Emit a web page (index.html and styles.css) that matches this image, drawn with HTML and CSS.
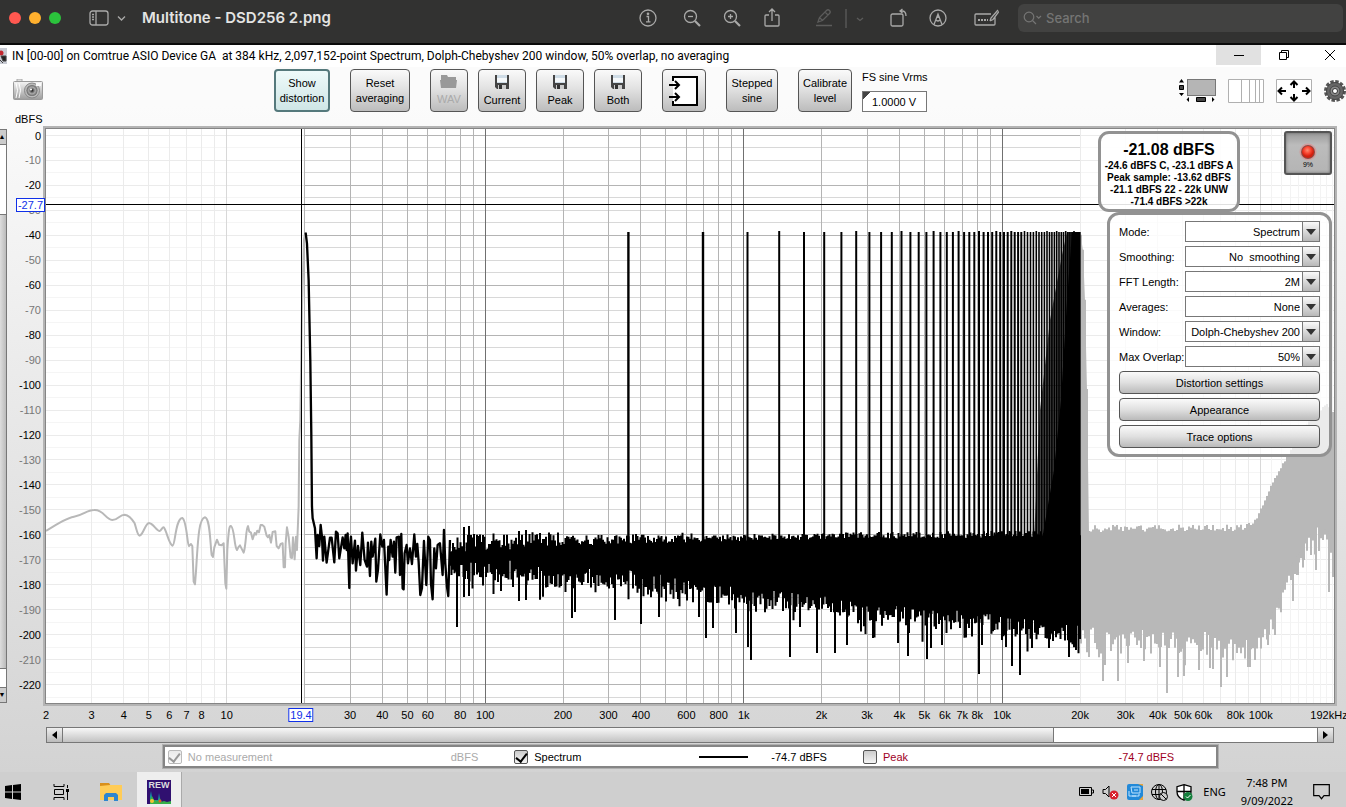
FILE: index.html
```html
<!DOCTYPE html>
<html lang="en">
<head>
<meta charset="utf-8">
<title>Multitone - DSD256 2.png</title>
<link rel="stylesheet" href="styles.css">
</head>
<body>
<svg class="defs" width="0" height="0" aria-hidden="true">
  <defs>
    <linearGradient id="metal" x1="0" y1="0" x2="0" y2="1"><stop offset="0" stop-color="#f4f4f4"/><stop offset="1" stop-color="#9c9c9c"/></linearGradient>
    <radialGradient id="lens"><stop offset="0" stop-color="#111"/><stop offset=".3" stop-color="#666"/><stop offset=".6" stop-color="#aaa"/><stop offset="1" stop-color="#666"/></radialGradient>
    <radialGradient id="lamp" cx=".45" cy=".35"><stop offset="0" stop-color="#ff8a70"/><stop offset=".6" stop-color="#f8402c"/><stop offset="1" stop-color="#d02010"/></radialGradient>
    <symbol id="floppy" viewBox="0 0 16 16"><path d="M1 1h14v14H3l-2-2z" fill="#444"/><path d="M3 1h10v8H3z" fill="#cfdce6"/><path d="M3 4h10v4H3z" fill="#f5f8fa"/><path d="M4 11h8v4H4z" fill="#ccc"/><path d="M5 11h3v4H5z" fill="#333"/></symbol>
  </defs>
</svg>

<header class="preview-bar">
  <div class="lights"><button class="light red" aria-label="Close"></button><button class="light amber" aria-label="Minimise"></button><button class="light green" aria-label="Zoom"></button></div>
  <button class="tool sidebar-toggle" aria-label="Sidebar"><svg width="38" height="18" viewBox="0 0 38 18"><rect x="1" y="2" width="18" height="14" rx="2.500"/><path d="M7 2v14M3 5.500h2M3 8h2M3 10.500h2M29 7.500l3.500 3.500L36 7.500"/></svg></button>
  <h1 class="file-name">Multitone - DSD256 2.png</h1>
  <nav class="preview-tools">
    <button class="tool info" aria-label="Info"><svg width="20" height="20" viewBox="0 0 20 20"><circle cx="10" cy="10" r="8"/><path d="M8.500 8.500h2v5M8 13.800h4.500"/><circle cx="10" cy="5.800" r=".7"/></svg></button>
    <button class="tool" aria-label="Zoom out"><svg width="20" height="20" viewBox="0 0 20 20"><circle cx="8.500" cy="8.500" r="6"/><path d="M6 8.500h5"/><path d="M13 13l5 5" stroke-width="2.200"/></svg></button>
    <button class="tool" aria-label="Zoom in"><svg width="20" height="20" viewBox="0 0 20 20"><circle cx="8.500" cy="8.500" r="6"/><path d="M6 8.500h5M8.500 6v5"/><path d="M13 13l5 5" stroke-width="2.200"/></svg></button>
    <button class="tool" aria-label="Share"><svg width="20" height="20" viewBox="0 0 20 20"><path d="M7 7H4q-1 0-1 1v9q0 1 1 1h12q1 0 1-1V8q0-1-1-1h-3M10 13V1M7 4l3-3 3 3"/></svg></button>
    <button class="tool dim pen" aria-label="Highlight"><svg width="20" height="20" viewBox="0 0 20 20"><path d="M4 14l1.500-4.500L12.500 2.500q1.500-1.500 3 0t0 3L8.500 12.500zM5.500 9.500l3 3M11 4l3 3M2 17.500h16"/></svg></button>
    <button class="tool dim more" aria-label="Highlight colours"><svg width="24" height="20" viewBox="0 0 24 20"><path d="M2 1v19M13 10l3 2.500 3-2.500"/></svg></button>
    <button class="tool" aria-label="Rotate"><svg width="20" height="20" viewBox="0 0 20 20"><rect x="3" y="6" width="12" height="12" rx="1.500"/><path d="M12 3h2q4 0 4 5M14.500 1l-2.500 2 2.500 2"/></svg></button>
    <button class="tool" aria-label="Markup"><svg width="20" height="20" viewBox="0 0 20 20"><circle cx="10" cy="10" r="8"/><path d="M6 16.500L10 6l4 10.500M8 12q2 2 4 0M10 6v4"/></svg></button>
    <button class="tool form" aria-label="Form filling"><svg width="26" height="20" viewBox="0 0 26 20"><path d="M18 6H3q-1 0-1 1v9q0 1 1 1h18q1 0 1-1V9M17 13l1-3 7-8M17 13l3-1.500 6-8"/><path d="M5 12h10" stroke-width="2" stroke-dasharray="2 1"/></svg></button>
  </nav>
  <label class="search"><svg width="20" height="14" viewBox="0 0 20 14"><circle cx="6" cy="6" r="4.800"/><path d="M9.500 9.500L13 13M13.500 5l2.200 2.200L18 5"/></svg><input type="search" placeholder="Search" aria-label="Search"></label>
</header>

<main class="analyser">
  <div class="title-bar">
    <svg class="app-icon" width="7" height="18" viewBox="0 0 7 18"><path d="M0 1h7v16H0z" fill="#c9ccd4"/><circle cx="1" cy="6" r="2.500" fill="#c3272f"/><path d="M1 9l2 5h3V9zM0 13l3 3" fill="#222" stroke="#444"/></svg>
    <h2>IN [00-00] on Comtrue ASIO Device GA&nbsp; at 384 kHz, 2,097,152-point Spectrum, Dolph-Chebyshev 200 window, 50% overlap, no averaging</h2>
    <div class="window-buttons">
      <button class="minimise" aria-label="Minimise"><svg width="12" height="12" viewBox="0 0 12 12"><path d="M1 6.500h10"/></svg></button>
      <button aria-label="Restore"><svg width="12" height="12" viewBox="0 0 12 12"><path d="M1.500 3.500h7v7h-7zM3.500 3V1.500h7v7H9"/></svg></button>
      <button class="close" aria-label="Close"><svg width="12" height="12" viewBox="0 0 12 12"><path d="M1 1l10 10M11 1L1 11"/></svg></button>
    </div>
  </div>

  <div class="toolbar">
    <button class="icon-button" aria-label="Capture image"><svg width="30" height="22" viewBox="0 0 30 22"><path d="M4 2V0h5v2" fill="#ddd" stroke="#aaa"/><rect x=".5" y="2.500" width="29" height="18" rx="1" fill="url(#metal)" stroke="#9a9a9a"/><path d="M3 4q3 7 0 15M6 4q3 7 0 15" stroke="#fff" fill="none"/><circle cx="19" cy="11.500" r="7.500" fill="#bbb" stroke="#888"/><circle cx="19" cy="11.500" r="5.500" fill="url(#lens)"/><circle cx="18" cy="10.500" r="1" fill="#fff"/><path d="M23 4h5v3h-5z" fill="#fafafa"/></svg></button>
    <div class="actions">
      <button class="btn on show">Show distortion</button>
      <button class="btn reset">Reset averaging</button>
      <div class="save-group">
        <button class="btn wav" disabled><svg width="18" height="14" viewBox="0 0 18 14"><path d="M1 0h6l1 2h8v3H1zM0 5h17l-1 8H1z" fill="#999"/></svg>WAV</button>
        <button class="btn save"><svg width="16" height="16"><use href="#floppy"/></svg>Current</button>
        <button class="btn save"><svg width="16" height="16"><use href="#floppy"/></svg>Peak</button>
        <button class="btn save"><svg width="16" height="16"><use href="#floppy"/></svg>Both</button>
      </div>
      <button class="btn inputs" aria-label="Inputs"><svg width="30" height="32" viewBox="0 0 30 32"><path d="M4 6V2h24v28H4v-4" fill="#fff" stroke="none"/><path d="M4 6V2h24v28H4v-4" fill="none" stroke="#000" stroke-width="2"/><path d="M0 10h10M6 6l4 4-4 4M0 22h10M6 18l4 4-4 4" fill="none" stroke="#000" stroke-width="2"/></svg></button>
      <button class="btn stepped">Stepped sine</button>
      <button class="btn calibrate">Calibrate level</button>
      <div class="vrms"><label for="vrms">FS sine Vrms</label><input id="vrms" type="text" value="1.0000 V"></div>
    </div>
    <div class="view-tools">
      <button class="icon-button" aria-label="Scrollbars"><svg width="37" height="24" viewBox="0 0 37 24"><rect x="8.500" y=".5" width="28" height="16" fill="#b5b5b5" stroke="#777"/><path d="M0 3.500L2.500 0 5 3.500zM0 14h5l-2.500 3zM10 18v5l-2.500-2.500zM33 18v5l2.500-2.500z"/><path d="M.5 6.500h4v4h-4zM17.500 18.500h9v4h-9z" fill="#444" stroke="#000"/></svg></button>
      <button class="icon-button" aria-label="Frequency axis"><svg width="36" height="24" viewBox="0 0 36 24"><path d="M.5.500h35v23H.5z" fill="#fff" stroke="#b0b0b0"/><path d="M13.500 0v24M21.500 0v24M27.500 0v24M31.500 0v24" stroke="#b0b0b0"/></svg></button>
      <button class="icon-button" aria-label="Graph limits"><svg width="36" height="24" viewBox="0 0 36 24"><path d="M.5.500h35v23H.5z" fill="#fff" stroke="#b0b0b0"/><path d="M3 12h7M6 8.500L2.500 12 6 15.500M26 12h7M30 8.500l3.500 3.500-3.500 3.500M18 3v6M14.500 6L18 2.500 21.500 6M18 15v6M14.500 18l3.500 3.500 3.500-3.500" fill="none" stroke="#000" stroke-width="2"/></svg></button>
      <button class="icon-button" aria-label="Settings"><svg width="22" height="22" viewBox="0 0 22 22"><circle cx="11" cy="11" r="9.500" fill="none" stroke="#555" stroke-width="3" stroke-dasharray="3.400 1.570"/><circle cx="11" cy="11" r="8.500" fill="#666" stroke="#444"/><circle cx="11" cy="11" r="5" fill="#8a8a8a" stroke="#444"/><circle cx="11" cy="11" r="2.500" fill="#fff" stroke="#333"/></svg></button>
    </div>
  </div>

  <section class="graph">
    <div class="unit">dBFS</div>
    <div class="v-scroll"><button aria-label="Scroll up">▲</button><span class="v-thumb"></span><button aria-label="Scroll down">▼</button></div>
    <div class="y-axis" id="y-axis"></div>
    <div class="plot">
      <svg class="trace" viewBox="46 129 1288 574" preserveAspectRatio="none" role="img" aria-label="Spectrum of multitone signal">
        <g id="grid"></g>
        <g fill="none" stroke="#b8b8b8" stroke-linejoin="round">
          <path transform="translate(0 440) scale(.3333)" stroke-width="6" d="M138 273C170 252 200 234 222 230C250 226 260 210 282 210C312 208 315 238 337 240C355 240 358 224 374 224C390 226 398 240 404 250C410 268 412 286 419 287C430 284 436 250 447 249C460 250 470 273 479 273C484 272 486 262 491 262C500 270 506 314 518 317C526 316 526 236 547 234C560 240 562 316 567 318L573 312L577 318L581 425L585 433L588 395C594 300 596 236 615 232C630 236 630 300 635 345L639 351L643 322L651 299L657 314L665 316L671 310L676 430L679 446L682 330C686 270 688 256 693 258C704 265 702 320 711 330L715 322L720 316L731 338C738 320 738 262 744 258L748 275L753 278L758 298L764 279L768 284L772 272L777 277L782 255L787 255L793 260L800 287L804 292L808 285L813 308L818 276L826 274L830 318L836 325L842 312L848 310L851 382L855 382L857 310L861 262L866 290L872 353L876 354L879 292L884 358L888 290L891 330L896 200L898 0L901 -60L906 -400L912 -600L916 -624"/>
          <path id="ultrasonic" stroke-width="2"/>
        </g>
        <path id="ultrasonic-body" fill="#b8b8b8"/>
        <path fill="none" stroke="#000" stroke-linejoin="round" transform="translate(0 440) scale(.3333)" stroke-width="7" d="M917 -622L921 -590L926 -480L931 -240L934 -20L936 200L938 235L945 265L950 355L953 285L958 318L962 255L966 290L969 362L973 290L980 368L990 293L995 293L1003 367L1008 275L1013 280L1018 355L1028 292L1033 325L1037 285L1040 330L1043 280L1048 444L1050 322L1053 290L1058 370L1065 302L1068 392L1074 318L1081 375L1087 278L1094 360L1101 380L1104 308L1110 408L1114 305L1118 350L1126 296L1129 425L1134 390L1141 283L1147 320L1152 300L1160 464L1165 320L1168 360L1172 300L1178 350L1182 305L1186 398L1190 292L1197 290L1200 405L1204 282L1208 445L1211 448L1214 340L1220 315L1224 370L1230 325L1236 372L1243 283L1248 350L1252 312L1256 365L1261 465L1266 445L1272 303L1279 435L1285 290L1290 300L1293 430L1298 478L1303 325L1308 385L1313 315L1320 310L1328 405L1332 270L1336 370L1341 440L1345 468L1350 300"/>
        <path id="noise" fill="none" stroke="#000" stroke-width="2"/>
        <path id="noise-body"/>
        <g id="tones" stroke="#000"></g>
        <path d="M1034 540L1040 410L1050 320L1062 255L1067 232H1080V540z" opacity=".7"/>
        <path d="M1042 540L1054 470L1061 400L1067 300L1072 232H1080V540z"/>
        <path d="M46 204.500H1334M301.500 129V703" stroke="#000"/>
      </svg>
    </div>
    <div class="x-axis" id="x-axis"></div>

    <aside class="levels">
      <strong>-21.08 dBFS</strong>
      <span>-24.6 dBFS C, -23.1 dBFS A</span>
      <span>Peak sample: -13.62 dBFS</span>
      <span>-21.1 dBFS 22 - 22k UNW</span>
      <span>-71.4 dBFS &gt;22k</span>
    </aside>
    <button class="record"><svg width="18" height="18" viewBox="0 0 18 18"><circle cx="9" cy="9" r="8.500" fill="#f66" opacity=".35"/><circle cx="9" cy="9" r="7" fill="#8a4a44"/><circle cx="9" cy="9" r="6" fill="url(#lamp)"/></svg>9%</button>
    <form class="settings">
      <label for="mode">Mode:</label><span class="pick"><select id="mode"><option>Spectrum</option></select></span>
      <label for="smoothing">Smoothing:</label><span class="pick"><select id="smoothing"><option>No&nbsp; smoothing</option></select></span>
      <label for="fft">FFT Length:</label><span class="pick"><select id="fft"><option>2M</option></select></span>
      <label for="averages">Averages:</label><span class="pick"><select id="averages"><option>None</option></select></span>
      <label for="window">Window:</label><span class="pick"><select id="window"><option>Dolph-Chebyshev 200</option></select></span>
      <label for="overlap">Max Overlap:</label><span class="pick"><select id="overlap"><option>50%</option></select></span>
      <button type="button" class="wide">Distortion settings</button>
      <button type="button" class="wide">Appearance</button>
      <button type="button" class="wide">Trace options</button>
    </form>
  </section>

  <div class="h-scroll"><button aria-label="Scroll left"><svg width="5" height="8" viewBox="0 0 5 8"><path d="M5 0v8L0 4z"/></svg></button><span class="h-track"><span class="h-thumb"></span></span><button aria-label="Scroll right"><svg width="5" height="8" viewBox="0 0 5 8"><path d="M0 0v8l5-4z"/></svg></button></div>

  <div class="legend">
    <label class="off"><input type="checkbox" checked disabled>No measurement</label><span class="off value">dBFS</span>
    <label><input type="checkbox" checked>Spectrum</label><span class="key"></span><span class="value">-74.7 dBFS</span>
    <label class="peak"><input type="checkbox">Peak</label><span class="peak value">-74.7 dBFS</span>
  </div>
</main>

<footer class="taskbar">
  <div class="apps">
    <button aria-label="Start"><svg width="16" height="16" viewBox="0 0 16 16"><path d="M0 2l7-1v6.500H0zM8 1l8-1v7.500H8zM0 8.500h7V15l-7-1zM8 8.500h8V16l-8-1z"/></svg></button>
    <button aria-label="Task view"><svg width="17" height="16" viewBox="0 0 17 16"><path d="M1 0v2.500h10V0M1 16v-2.500h10V16M1.500 5.500h9v5h-9zM14.500 1v3M14.500 8v8" fill="none" stroke="#000"/><path d="M13 5h3v3h-3z"/></svg></button>
    <button aria-label="File Explorer"><svg width="22" height="18" viewBox="0 0 22 18"><path d="M0 0h9l2 3H0z" fill="#d9901c"/><path d="M0 3l10-1h12v15H0z" fill="#ffcc57"/><path d="M4 18v-6l2-2h10l2 2v6h-4v-4H8v4z" fill="#2f86cf"/></svg></button>
    <button class="active" aria-label="REW"><span class="rew">REW<svg width="24" height="14" viewBox="0 0 24 14"><path d="M3 10V5l1-5 1 6 2 3h4l1-7 1 6 2 3h9v3H3z" fill="#1590a8"/><path d="M3 12V8l2-3 2 4 4 1 2-3 1 4 3-1 3 1 4-1v4H3z" fill="#36b04a"/><circle cx="5" cy="10" r="2" fill="#f2c235"/><circle cx="13" cy="10" r="1.500" fill="#e85a20"/></svg></span></button>
  </div>
  <div class="tray">
    <svg width="15" height="10" viewBox="0 0 15 10"><path d="M.5.500h12v8H.5zM13 3h1.500v3H13" fill="none" stroke="#000"/><path d="M2 2h8v5H2z"/></svg>
    <svg width="17" height="16" viewBox="0 0 17 16"><path d="M1 5.500h2.500L7 2v11L3.500 9.500H1z" fill="none" stroke="#000"/><circle cx="12" cy="11" r="4.500" fill="#d8202c"/><path d="M10 9l4 4M14 9l-4 4" stroke="#fff"/></svg>
    <svg width="16" height="16" viewBox="0 0 16 16"><rect width="16" height="16" rx="2" fill="#2289d8"/><path d="M12 16h4v-4zM11 0h5v2z" fill="#e8a33b"/><path d="M4 3h9v6H5zM7 6h4M2 7v5h7M5 12h7v-2" fill="none" stroke="#bfe4ff"/></svg>
    <svg width="17" height="17" viewBox="0 0 17 17"><g fill="none" stroke="#000"><circle cx="8" cy="8" r="7.500"/><ellipse cx="8" cy="8" rx="3.500" ry="7.500"/><path d="M8 .5v15M1 5.500h14M1 10.500h14"/></g><circle cx="12.500" cy="12.500" r="4" fill="#ccc" stroke="#000"/><path d="M10 10l5 5" stroke="#000"/></svg>
    <svg width="17" height="17" viewBox="0 0 17 17"><path d="M8 .7l7 2v5q0 6-7 8.500-7-2.500-7-8.500v-5z" fill="#fff" stroke="#000" stroke-width="1.300"/><path d="M8 1v15M1 7.500h14" stroke="#000" stroke-width="1.300"/><circle cx="12" cy="12.500" r="4.500" fill="#15803d"/><path d="M10 12.500l1.500 1.500 3-3" fill="none" stroke="#fff"/></svg>
    <span class="lang">ENG</span>
    <span class="clock">7:48 PM<br>9/09/2022</span>
    <svg width="17" height="16" viewBox="0 0 17 16"><path d="M.7.700h15.600v11H11l-2.500 3-2.500-3H.7z" fill="none" stroke="#000" stroke-width="1.200"/></svg>
  </div>
</footer>
<script src="chart.js"></script>
</body>
</html>
```
FILE: styles.css
```css
* { box-sizing: border-box; }
body { margin: 0; min-height: 100vh; display: flex; flex-direction: column; overflow: hidden; font: 11px/14px "Liberation Sans", Arial, sans-serif; color: #000; }
button, input, select { font: inherit; color: inherit; margin: 0; padding: 0; }
button { background: none; border: 0; }
h1, h2 { margin: 0; }
svg { display: block; flex: none; }
.defs { position: absolute; }

.preview-bar { height: 45px; flex: none; display: flex; align-items: center; background: #323231; border-bottom: 2px solid #0a0a0a; padding: 0 3px 8px 9px; }
.lights { display: flex; gap: 8px; }
.light { width: 12px; height: 12px; border-radius: 50%; }
.red { background: #ff5850; }
.amber { background: #ffb02e; }
.green { background: #2bc23c; }
.tool svg { fill: none; stroke: #a9a9a8; stroke-width: 1.3; }
.tool.dim svg { stroke: #5c5c5b; }
.sidebar-toggle { margin-left: 28px; }
.file-name { margin-left: 15px; font: 600 15px/20px Inter, sans-serif; color: #e4e4e3; white-space: nowrap; }
.preview-tools { display: flex; gap: 20px; margin-left: auto; padding-right: 19px; }
.info { margin-right: 4px; }
.pen { margin-left: 12px; }
.preview-tools .more { margin-left: -10px; }
.form { margin-left: 5px; }
.search { display: flex; align-items: center; gap: 3px; width: 325px; height: 28px; padding-left: 5px; border-radius: 6px; background: #424241; }
.search svg { fill: none; stroke: #757574; stroke-width: 1.2; }
.search input { flex: 1; min-width: 0; border: 0; background: none; font: 500 13px/20px Inter, sans-serif; color: #ddd; }
.search input::placeholder { color: #757574; opacity: 1; }

.analyser { flex: 1; display: flex; flex-direction: column; background: linear-gradient(#fbfbfb 60px, #d3d3d3 100%); }
.title-bar { display: flex; align-items: center; height: 22px; background: #fff; }
.title-bar h2 { margin-left: 5px; font: 400 12px/20px Roboto, sans-serif; white-space: nowrap; }
.window-buttons { display: flex; align-self: stretch; margin-left: auto; }
.window-buttons button { width: 45px; height: 20px; display: grid; place-items: center; }
.window-buttons .close { width: 40px; padding-left: 8px; }
.window-buttons .minimise { background: #e1e1e1; }
.window-buttons svg { fill: none; stroke: #000; }

.toolbar { display: flex; align-items: flex-start; height: 45px; padding: 2px 0 0 13px; }
.icon-button { margin-top: 10px; }
.actions { display: flex; gap: 20px; margin-left: 231px; }
.save-group { display: flex; gap: 10px; }
.btn { height: 43px; padding: 0 1px; border: 1px solid #555; border-radius: 4px; background: linear-gradient(#fafafa, #e2e2e2 45%, #bcbcbc); display: flex; flex-direction: column; align-items: center; justify-content: center; gap: 3px; line-height: 15px; }
.on { border: 2px solid #55797c; background: linear-gradient(#eefafa, #cfe6e6); }
.show { width: 56px; }
.reset { width: 60px; }
.wav { width: 38px; color: #aaa; }
.save { width: 48px; }
.inputs { width: 44px; }
.stepped { width: 52px; }
.calibrate { width: 54px; }
.vrms { display: flex; flex-direction: column; gap: 7px; margin-left: -10px; padding-top: 1px; }
.vrms input { width: 65px; height: 21px; padding-left: 9px; border: 1px solid #777; background: linear-gradient(135deg, #444 5px, #fff 5px); }
.view-tools { display: flex; gap: 12px; margin-left: auto; }

.graph { flex: 1; position: relative; display: grid; grid-template: 17px 1fr 24px / 7px 39px 1fr 12px; }
.unit { grid-column: 1 / 4; padding-left: 15px; }
.v-scroll { grid-row: 2; grid-column: 1; display: flex; flex-direction: column; border: 1px solid #777; border-left: 0; background: #fff; overflow: hidden; }
.v-scroll button { height: 15px; width: 6px; font-size: 7px; line-height: 14px; background: #ccc; border-bottom: 1px solid #777; text-indent: -2px; }
.v-scroll button:last-child { border-top: 1px solid #777; border-bottom: 0; }
.v-thumb { flex: 1; margin: 69px 0 18px; border: solid #777; border-width: 1px 0; background: linear-gradient(90deg, #ddd, #bbb); }
.y-axis { grid-row: 2; grid-column: 2; position: relative; }
.y-axis span { position: absolute; right: 5px; transform: translateY(-50%); color: #000; }
.y-axis .mid { color: #777; }
.plot { grid-row: 2; grid-column: 3; position: relative; background: #fff; box-shadow: 0 0 0 1px #858585, 0 0 0 3px #b4b4b4; min-width: 0; }
.trace { position: absolute; width: 100%; height: 100%; }
.x-axis { grid-row: 3; grid-column: 3; position: relative; }
.x-axis span { position: absolute; top: 5px; transform: translateX(-50%); }
.y-axis .cursor, .x-axis .cursor { padding: 0 1px; border: 1px solid #1030e8; background: #fff; color: #1030e8; z-index: 1; line-height: 12px; }
.y-axis .cursor { right: 1px; }

.levels { position: absolute; top: 19px; right: 106px; width: 142px; height: 81px; padding-top: 6px; display: flex; flex-direction: column; align-items: center; border: 3px solid #929292; border-radius: 11px; background: rgba(255, 255, 255, .88); font-weight: 700; font-size: 10px; line-height: 12px; white-space: nowrap; overflow: hidden; }
.levels strong { font-size: 16px; line-height: 20px; }
.record { position: absolute; top: 19px; right: 14px; width: 48px; height: 44px; padding-top: 4px; display: flex; flex-direction: column; align-items: center; justify-content: center; border: 2px solid #555; border-radius: 3px; background: linear-gradient(#9a9a9a, #bcbcbc 30%, #b4b4b4); box-shadow: inset 0 0 3px #666; font-size: 7px; line-height: 7px; }
.settings { position: absolute; top: 100px; right: 14px; width: 225px; padding: 6px 9px 6px; display: grid; grid-template-columns: 66px 1fr; gap: 4px 0; align-items: center; border: 3px solid #929292; border-radius: 12px; background: rgba(255, 255, 255, .72); }
.settings label { white-space: nowrap; }
.pick { position: relative; }
.pick select { display: block; width: 100%; height: 21px; padding-right: 19px; border: 1px solid #777; border-radius: 0; background: #fff; appearance: none; text-align: right; text-align-last: right; }
.pick::before { content: ""; position: absolute; inset: 1px 1px 1px auto; width: 16px; border-left: 1px solid #777; background: linear-gradient(#fafafa, #b8b8b8); pointer-events: none; }
.pick::after { content: ""; position: absolute; right: 4px; top: 8px; border: solid transparent; border-width: 6px 5px 0; border-top-color: #333; pointer-events: none; }
.wide { grid-column: 1 / 3; height: 23px; border: 1px solid #555; border-radius: 4px; background: linear-gradient(#fafafa, #e0e0e0 50%, #bababa); }

.h-scroll { display: flex; height: 16px; margin: 0 12px 0 46px; border: 1px solid #777; background: #fff; }
.h-scroll button { width: 15px; display: grid; place-items: center; background: linear-gradient(#eee, #bbb); }
.h-track { flex: 1; border: solid #777; border-width: 0 1px; }
.h-thumb { display: block; width: 79%; height: 100%; border-right: 1px solid #777; background: linear-gradient(#f8f8f8, #c2c2c2); }
.legend { display: flex; align-items: center; width: 78.4%; height: 23px; margin: 2px 0 4px 12.1%; padding: 0 42px 0 3px; border: 2px solid #858585; background: #fff; box-shadow: 0 0 0 1px #b0b0b0; }
.legend label { display: flex; align-items: center; gap: 6px; }
.legend input { appearance: none; width: 14px; height: 14px; border: 1px solid #555; border-radius: 2px; background: linear-gradient(#ccc, #f4f4f4); display: grid; place-items: center; }
.legend input:checked::after { content: ""; width: 5px; height: 9px; border: solid #000; border-width: 0 2px 2px 0; transform: rotate(38deg); }
.legend input:disabled { opacity: .4; }
.off { color: #aaa; }
.off.value { width: 206px; margin-right: 36px; text-align: right; }
.key { width: 49px; height: 2px; margin-left: 118px; background: #000; }
.key + .value { margin: 0 36px 0 23px; }
.peak { color: #a0001e; }
.peak.value { margin-left: auto; }

.taskbar { height: 35px; flex: none; display: flex; justify-content: space-between; background: #cfcfcf; }
.apps { display: flex; }
.apps button { width: 48px; display: grid; place-items: center; padding-top: 4px; }
.apps button:first-child { width: 37px; padding-right: 11px; }
.apps button:nth-child(3) { width: 52px; }
.apps .active { width: 45px; margin-left: 0; background: #eee; border-right: 1px solid #aaa; }
.rew { display: block; width: 24px; height: 24px; background: #301070; color: #ddd; font: 700 9px/11px "Liberation Sans", sans-serif; overflow: hidden; }
.tray { display: flex; align-items: center; gap: 8px; padding: 5px 16px 0 0; font: 11px/18px "Noto Sans", sans-serif; }
.lang { margin-left: 2px; }
.clock { align-self: flex-start; margin: -3px 12px 0 7px; text-align: center; }
```
FILE: chart.js
```js
// Base plot space: 1288 x 574 units with its origin at (46, 129).
const LEFT = 46, TOP = 129, WIDTH = 1288, HEIGHT = 574;
const x = f => LEFT + WIDTH * Math.log(f / 2) / Math.log(96000);
const y = db => 135.5 - db * 2.496;
const byId = id => document.getElementById(id);

let seed = 11;
const rnd = () => (seed = (seed * 16807) % 2147483647) / 2147483647;

// Grid: full strength inside 20 Hz - 20 kHz, faint elsewhere
let grid = '';
const line = (x1, y1, x2, y2, c) => { grid += `<path d="M${x1} ${y1}L${x2} ${y2}" stroke="${c}"/>`; };
const snap = v => Math.floor(v) + 0.5;
for (let db = 0; db >= -225; db -= 5) {
  const v = snap(y(db));
  line(46, v, 305, v, db % 10 ? '#f5f5f5' : '#ebebeb');
  line(305, v, 1080, v, db % 20 ? '#d8d8d8' : '#b4b4b4');
  line(1080, v, 1334, v, db % 10 ? '#f5f5f5' : '#ebebeb');
}
for (let d = 1; d <= 100000; d *= 10) {
  for (let m = 1; m < 10; m++) {
    const f = d * m;
    if (f <= 2 || f > 192000) continue;
    const inside = f >= 20 && f < 20000;
    line(snap(x(f)), TOP, snap(x(f)), 703, inside ? (m === 1 ? '#707070' : '#b4b4b4') : (m === 1 ? '#d8d8d8' : '#ebebeb'));
  }
}
for (let f = 110000; f <= 190000; f += 10000) line(snap(x(f)), TOP, snap(x(f)), 703, '#f3f3f3');
byId('grid').innerHTML = grid;

const along = (pts, v) => {
  let i = 1;
  while (i < pts.length - 1 && pts[i][0] < v) i++;
  const [a, b] = [pts[i - 1], pts[i]];
  return a[1] + (b[1] - a[1]) * (v - a[0]) / (b[0] - a[0]);
};

// Noise floor: a solid core with ragged upper and lower edges
function floor(from, to, step, upper, lower, jitterUp, jitterDown, dips, edge, body) {
  let d = '', top = '', bottom = '';
  for (let v = from; v <= to; v += step) {
    const hi = along(upper, v) - rnd() * jitterUp(v);
    const base = along(lower, v);
    const tail = Math.min(-Math.log(1 - rnd()) * 5, 18);
    const lo = base + rnd() * jitterDown(v) + tail;
    const at = v.toFixed(1);
    d += `M${at} ${hi.toFixed(1)}V${lo.toFixed(1)}`;
    top += `L${at} ${(along(upper, v) + 1).toFixed(1)}`;
    bottom = `L${at} ${base.toFixed(1)}` + bottom;
  }
  for (const [v, lo] of dips) d += `M${v} ${lo - 70}V${lo}`;
  byId(edge).setAttribute('d', d);
  byId(body).setAttribute('d', 'M' + top.slice(1) + bottom + 'z');
}
floor(450, 1080, 1.5,
  [[450, 552], [500, 550], [560, 546], [700, 542], [850, 539], [1080, 537]],
  [[450, 556], [540, 562], [640, 570], [760, 586], [900, 604], [1000, 613], [1080, 624]],
  v => v < 560 ? 17 : v < 700 ? 10 : 7, v => v < 560 ? 22 : 19,
  [[457, 627], [464, 597], [469, 596], [519, 601], [526, 600], [572, 618], [575, 612], [615, 620], [641, 624], [659, 617], [699, 617], [706, 638], [713, 628], [736, 633], [748, 647], [751, 660], [790, 657], [800, 627], [817, 653], [835, 653], [847, 645], [873, 638], [898, 643], [908, 656], [927, 659], [931, 648], [942, 645], [979, 674], [982, 645], [1006, 647], [1012, 666], [1020, 675], [1032, 648], [1049, 648], [1069, 657], [1076, 650]],
  'noise', 'noise-body');
floor(1081, 1333, 2,
  [[1080, 232], [1082, 240], [1083, 250], [1085, 300], [1087, 390], [1088, 500], [1089, 532], [1247, 531], [1257, 519], [1262, 508], [1273, 483], [1287, 458], [1297, 440], [1310, 422], [1327, 405], [1334, 415]],
  [[1080, 622], [1150, 628], [1250, 634], [1261, 632], [1273, 612], [1280, 594], [1287, 572], [1297, 556], [1307, 538], [1317, 526], [1327, 530], [1334, 542]],
  v => v > 1090 && v < 1250 ? 7 : 2, v => v > 1260 ? 12 : 22,
  [[1089, 657], [1103, 681], [1105, 665], [1118, 681], [1128, 663], [1144, 661], [1160, 667], [1167, 693], [1178, 677], [1184, 676], [1199, 670], [1210, 668], [1213, 669], [1221, 687], [1227, 677], [1248, 667], [1250, 667], [1268, 645], [1275, 635], [1281, 609], [1293, 601], [1298, 575], [1304, 560], [1316, 570], [1329, 592], [1333, 577]],
  'ultrasonic', 'ultrasonic-body');

// Test tones, 338 Hz apart
let tones = '';
for (let n = 1; n < 60; n++) {
  const v = x(20 + 338 * n);
  tones += `<path d="M${v.toFixed(1)} ${n % 4 ? 232 : 231}V545" stroke-width="${n < 3 ? 2.4 : n > 35 ? 1.6 : 2}"/>`;
}
byId('tones').innerHTML = tones;

// Axis labels
let ys = '';
for (let db = 0; db >= -220; db -= 10) {
  ys += `<span class="${db % 20 ? 'mid' : ''}" style="top:${(y(db) - TOP) / HEIGHT * 100}%">${db}</span>`;
}
ys += `<span class="cursor" style="top:${(204.5 - TOP) / HEIGHT * 100}%">-27.7</span>`;
byId('y-axis').innerHTML = ys;

const ticks = [2, 3, 4, 5, 6, 7, 8, 10, 30, 40, 50, 60, 80, 100, 200, 300, 400, 600, 800, 1e3, 2e3, 3e3, 4e3, 5e3, 6e3, 7e3, 8e3, 1e4, 2e4, 3e4, 4e4, 5e4, 6e4, 8e4, 1e5, 192e3];
const name = f => f === 192e3 ? '192kHz' : f >= 1000 ? f / 1000 + 'k' : f;
// The last tick is centred slightly inside the plot edge to leave room for its unit
const tickX = f => f === 192e3 ? 1329 : x(f);
let xs = ticks.map(f => `<span style="left:${(tickX(f) - LEFT) / WIDTH * 100}%">${name(f)}</span>`).join('');
xs += `<span class="cursor" style="left:${(301 - LEFT) / WIDTH * 100}%">19.4</span>`;
byId('x-axis').innerHTML = xs;
```
